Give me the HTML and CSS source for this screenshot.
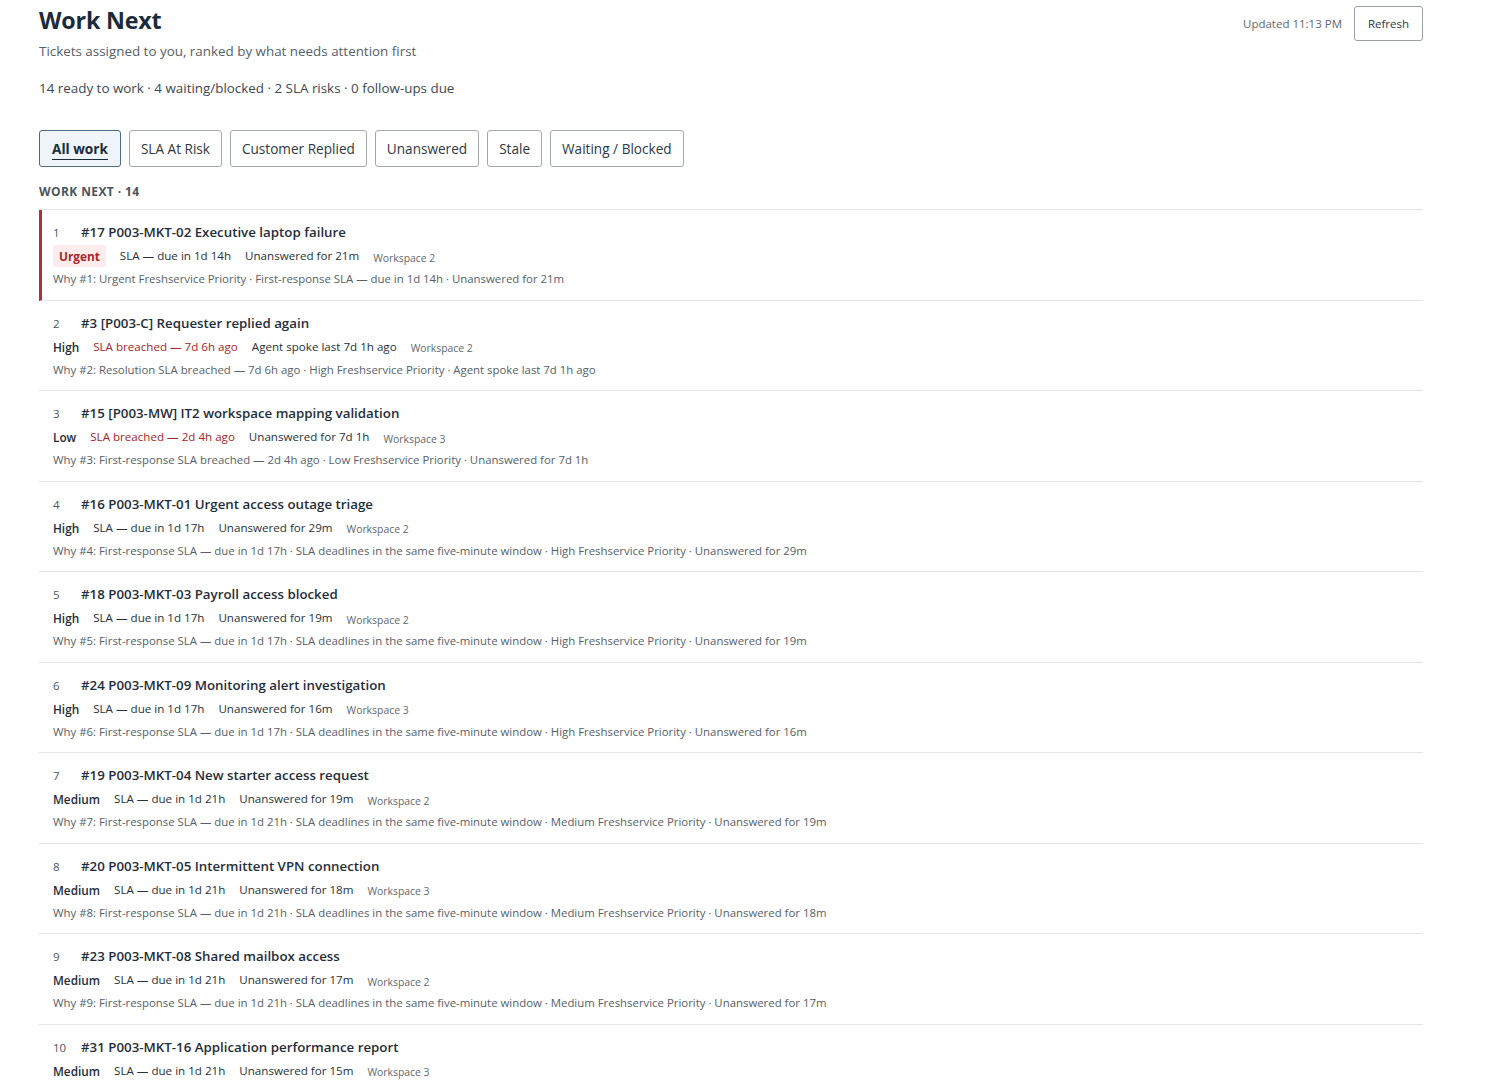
FILE: index.html
```html
<!DOCTYPE html>
<html lang="en">
<head>
<meta charset="utf-8">
<title>Work Next</title>
<link rel="stylesheet" href="styles.css">
</head>
<body>
<div class="page">
  <header class="top">
    <div class="top-left">
      <h1 class="title">Work Next</h1>
      <p class="subtitle">Tickets assigned to you, ranked by what needs attention first</p>
      <p class="summary">14 ready to work · 4 waiting/blocked · 2 SLA risks · 0 follow-ups due</p>
    </div>
    <div class="top-right">
      <span class="updated">Updated 11:13 PM</span>
      <button class="refresh">Refresh</button>
    </div>
  </header>

  <nav class="tabs">
    <button class="tab active"><span>All work</span></button>
    <button class="tab">SLA At Risk</button>
    <button class="tab">Customer Replied</button>
    <button class="tab">Unanswered</button>
    <button class="tab">Stale</button>
    <button class="tab">Waiting / Blocked</button>
  </nav>

  <div class="section-label">WORK NEXT · 14</div>

  <ul class="list">
    <li class="row urgent">
      <div class="line1"><span class="num">1</span><span class="tname">#17 P003-MKT-02 Executive laptop failure</span></div>
      <div class="meta"><span class="prio badge">Urgent</span><span>SLA — due in 1d 14h</span><span>Unanswered for 21m</span><span class="ws">Workspace 2</span></div>
      <div class="why">Why #1: Urgent Freshservice Priority · First-response SLA — due in 1d 14h · Unanswered for 21m</div>
    </li>
    <li class="row">
      <div class="line1"><span class="num">2</span><span class="tname">#3 [P003-C] Requester replied again</span></div>
      <div class="meta"><span class="prio">High</span><span class="breach">SLA breached — 7d 6h ago</span><span>Agent spoke last 7d 1h ago</span><span class="ws">Workspace 2</span></div>
      <div class="why">Why #2: Resolution SLA breached — 7d 6h ago · High Freshservice Priority · Agent spoke last 7d 1h ago</div>
    </li>
    <li class="row">
      <div class="line1"><span class="num">3</span><span class="tname">#15 [P003-MW] IT2 workspace mapping validation</span></div>
      <div class="meta"><span class="prio">Low</span><span class="breach">SLA breached — 2d 4h ago</span><span>Unanswered for 7d 1h</span><span class="ws">Workspace 3</span></div>
      <div class="why">Why #3: First-response SLA breached — 2d 4h ago · Low Freshservice Priority · Unanswered for 7d 1h</div>
    </li>
    <li class="row">
      <div class="line1"><span class="num">4</span><span class="tname">#16 P003-MKT-01 Urgent access outage triage</span></div>
      <div class="meta"><span class="prio">High</span><span>SLA — due in 1d 17h</span><span>Unanswered for 29m</span><span class="ws">Workspace 2</span></div>
      <div class="why">Why #4: First-response SLA — due in 1d 17h · SLA deadlines in the same five-minute window · High Freshservice Priority · Unanswered for 29m</div>
    </li>
    <li class="row">
      <div class="line1"><span class="num">5</span><span class="tname">#18 P003-MKT-03 Payroll access blocked</span></div>
      <div class="meta"><span class="prio">High</span><span>SLA — due in 1d 17h</span><span>Unanswered for 19m</span><span class="ws">Workspace 2</span></div>
      <div class="why">Why #5: First-response SLA — due in 1d 17h · SLA deadlines in the same five-minute window · High Freshservice Priority · Unanswered for 19m</div>
    </li>
    <li class="row">
      <div class="line1"><span class="num">6</span><span class="tname">#24 P003-MKT-09 Monitoring alert investigation</span></div>
      <div class="meta"><span class="prio">High</span><span>SLA — due in 1d 17h</span><span>Unanswered for 16m</span><span class="ws">Workspace 3</span></div>
      <div class="why">Why #6: First-response SLA — due in 1d 17h · SLA deadlines in the same five-minute window · High Freshservice Priority · Unanswered for 16m</div>
    </li>
    <li class="row">
      <div class="line1"><span class="num">7</span><span class="tname">#19 P003-MKT-04 New starter access request</span></div>
      <div class="meta"><span class="prio">Medium</span><span>SLA — due in 1d 21h</span><span>Unanswered for 19m</span><span class="ws">Workspace 2</span></div>
      <div class="why">Why #7: First-response SLA — due in 1d 21h · SLA deadlines in the same five-minute window · Medium Freshservice Priority · Unanswered for 19m</div>
    </li>
    <li class="row">
      <div class="line1"><span class="num">8</span><span class="tname">#20 P003-MKT-05 Intermittent VPN connection</span></div>
      <div class="meta"><span class="prio">Medium</span><span>SLA — due in 1d 21h</span><span>Unanswered for 18m</span><span class="ws">Workspace 3</span></div>
      <div class="why">Why #8: First-response SLA — due in 1d 21h · SLA deadlines in the same five-minute window · Medium Freshservice Priority · Unanswered for 18m</div>
    </li>
    <li class="row">
      <div class="line1"><span class="num">9</span><span class="tname">#23 P003-MKT-08 Shared mailbox access</span></div>
      <div class="meta"><span class="prio">Medium</span><span>SLA — due in 1d 21h</span><span>Unanswered for 17m</span><span class="ws">Workspace 2</span></div>
      <div class="why">Why #9: First-response SLA — due in 1d 21h · SLA deadlines in the same five-minute window · Medium Freshservice Priority · Unanswered for 17m</div>
    </li>
    <li class="row">
      <div class="line1"><span class="num">10</span><span class="tname">#31 P003-MKT-16 Application performance report</span></div>
      <div class="meta"><span class="prio">Medium</span><span>SLA — due in 1d 21h</span><span>Unanswered for 15m</span><span class="ws">Workspace 3</span></div>
      <div class="why">Why #10: First-response SLA — due in 1d 21h · SLA deadlines in the same five-minute window · Medium Freshservice Priority · Unanswered for 15m</div>
    </li>
  </ul>
</div>
</body>
</html>
```

FILE: styles.css
```css
* { box-sizing: border-box; }
html, body { margin: 0; padding: 0; background: #fff; }
body {
  font-family: "Open Sans", "Noto Sans", "Liberation Sans", sans-serif;
  color: #1f2d3a;
  font-size: 13px;
}
.page {
  width: 1423px;
  padding: 0 0 0 39px;
}
.top {
  display: flex;
  justify-content: space-between;
  align-items: flex-start;
}
.title {
  margin: 0;
  padding-top: 5px;
  font-size: 23.3px;
  line-height: 30px;
  font-weight: 700;
  color: #1b2b3b;
  letter-spacing: -0.2px;
}
.subtitle {
  margin: 6px 0 0;
  font-size: 13.4px;
  line-height: 20px;
  color: #56606a;
}
.summary {
  margin: 17px 0 0;
  font-size: 13.4px;
  line-height: 20px;
  color: #3c4752;
}
.top-right {
  display: flex;
  align-items: center;
  gap: 12px;
  padding-top: 6px;
}
.updated {
  font-size: 11.5px;
  color: #5f6770;
}
.refresh {
  font-family: inherit;
  font-size: 11.5px;
  color: #2b3640;
  background: #fff;
  border: 1px solid #9aa0a6;
  border-radius: 3px;
  width: 69px;
  height: 35px;
  padding: 0;
}
.tabs {
  display: flex;
  gap: 8px;
  margin-top: 32px;
}
.tab {
  font-family: inherit;
  font-size: 13.6px;
  color: #2d3843;
  background: #fff;
  border: 1px solid #a3a8ad;
  border-radius: 3px;
  height: 37px;
  padding: 0 11px;
  cursor: pointer;
}
.tab.active {
  background: #eef4f9;
  border-color: #4c6b86;
  font-weight: 700;
  color: #1b2b3b;
  padding: 0 12px;
}
.tab.active span {
  border-bottom: 1.5px solid #1b2b3b;
  padding-bottom: 1px;
}
.section-label {
  margin-top: 17px;
  font-size: 12px;
  font-weight: 700;
  color: #4a545e;
  letter-spacing: 0.4px;
  line-height: 16px;
}
.list {
  list-style: none;
  margin: 9px 0 0;
  padding: 0;
  border-top: 1px solid #e3e5e8;
  width: 1384px;
}
.row {
  border-bottom: 1px solid #e3e5e8;
  padding: 13px 0 12px 14px;
}
.row.urgent { border-left: 3px solid #a8323a; padding-left: 11px; }
.line1 {
  display: flex;
  align-items: baseline;
  height: 18px;
  line-height: 18px;
}
.num {
  width: 28px;
  font-size: 11.5px;
  color: #4a545e;
}
.tname {
  font-size: 13.3px;
  font-weight: 600;
  color: #1f2d3a;
}
.meta {
  display: flex;
  align-items: center;
  gap: 14px;
  margin-top: 4px;
  height: 22px;
  line-height: 22px;
  font-size: 11.6px;
  color: #26313c;
}
.prio {
  font-weight: 600;
  font-size: 11.8px;
  color: #1f2d3a;
}
.prio.badge {
  background: #fdeceb;
  color: #a4262c;
  padding: 0 6px;
  border-radius: 2px;
  font-weight: 700;
}
.breach { color: #a4262c; }
.ws {
  font-size: 10.4px;
  color: #5f6770;
  padding-top: 3px;
}
.why {
  margin-top: 4px;
  height: 16.5px;
  font-size: 11.4px;
  line-height: 16.5px;
  color: #56606a;
}
```
